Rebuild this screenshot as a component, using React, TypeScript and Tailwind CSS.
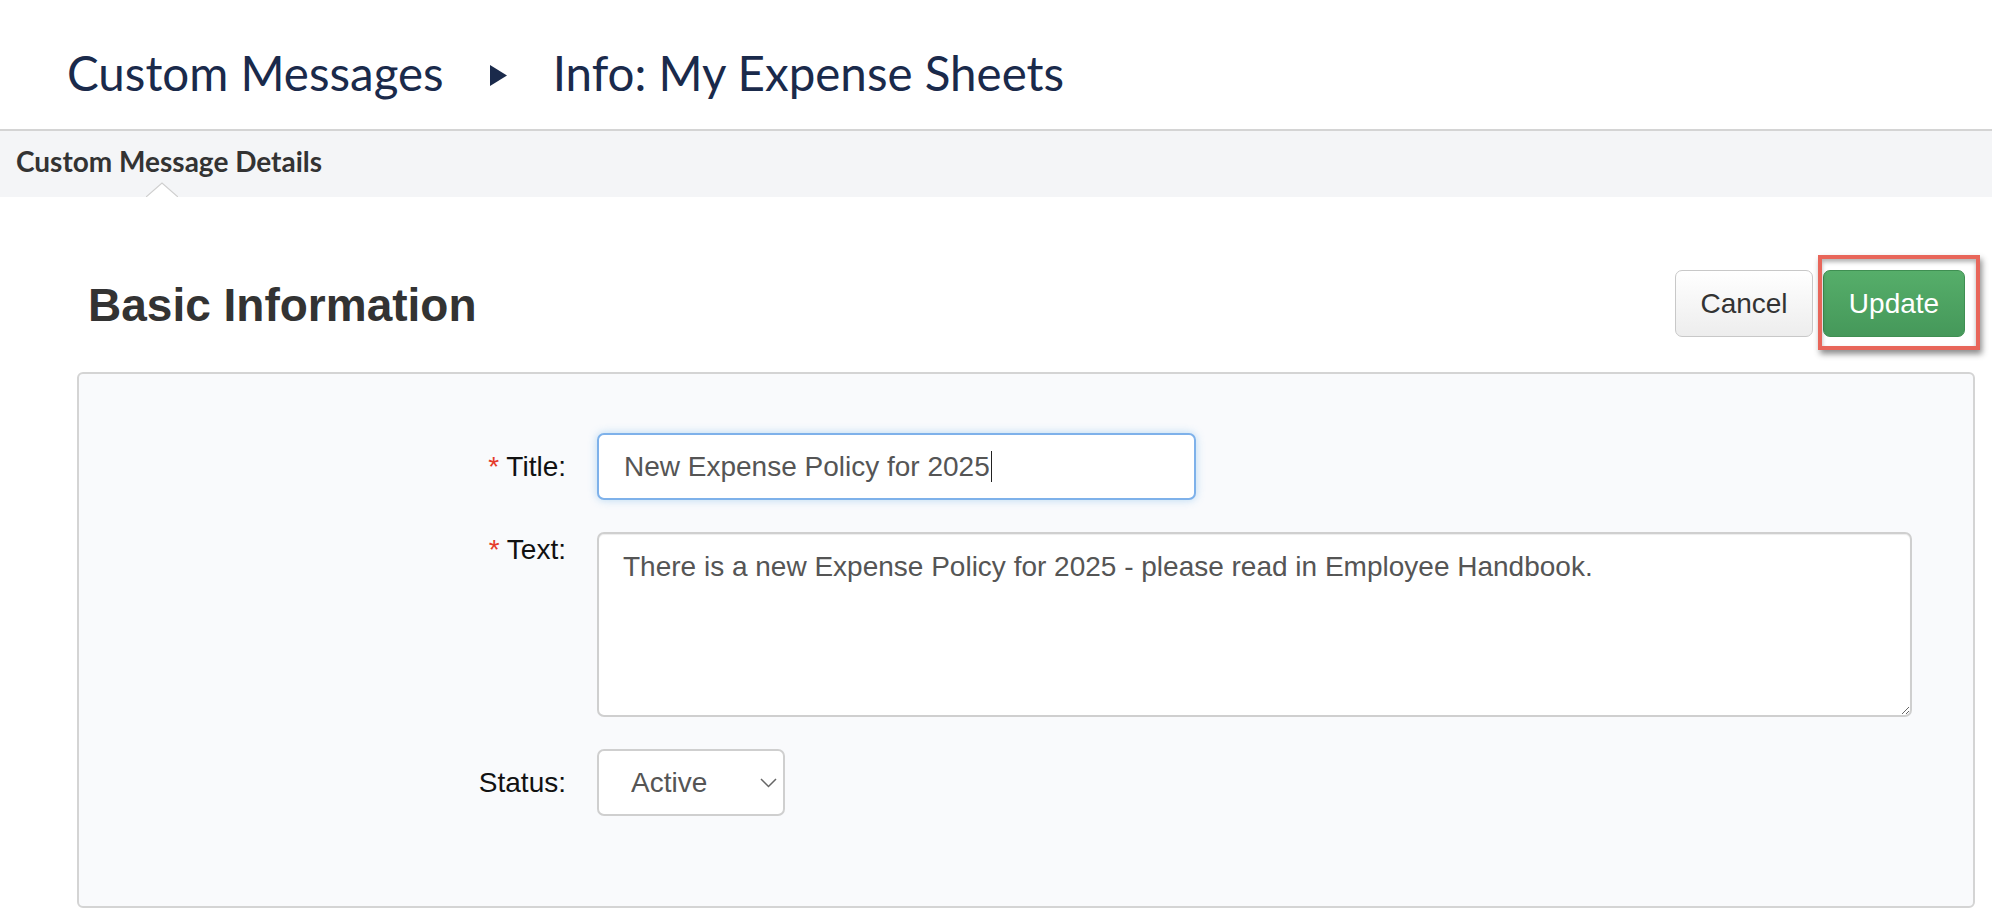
import React from 'react';

const navy = '#1a2a4b';

function Crumbs() {
  return (
    <header className="h-[131px] border-b-2 border-[#d4d4d4] bg-white pl-[67px] pt-[44px]">
      <div
        className="flex items-center font-['Lato',sans-serif] text-[47.5px] leading-[58px]"
        style={{ color: navy }}
      >
        <span>Custom Messages</span>
        <svg width="17" height="21" viewBox="0 0 17 21" className="mx-[46px] mt-[5px]">
          <path d="M0 0 L17 10.5 L0 21 Z" fill={navy} />
        </svg>
        <span>Info: My Expense Sheets</span>
      </div>
    </header>
  );
}

function TabBar() {
  return (
    <div className="relative h-[66px] bg-[#f4f5f7] pl-[16px] pt-[13px]">
      <span className="font-['Lato',sans-serif] text-[28px] font-bold leading-[34px] text-[#333]">
        Custom Message Details
      </span>
      <svg width="32" height="15" viewBox="0 0 32 15" className="absolute bottom-0 left-[146px]">
        <path d="M0 15 L16 1 L32 15 Z" fill="#fff" />
        <path d="M0 15 L16 1 L32 15" fill="none" stroke="#cfcfcf" strokeWidth="1.2" />
      </svg>
    </div>
  );
}

function Label({ text, required, className }: { text: string; required?: boolean; className?: string }) {
  return (
    <label
      className={`w-[487px] shrink-0 text-right text-[28px] leading-[40px] text-[#111] ${className ?? ''}`}
    >
      {required && <span className="text-[#e53a2a]">* </span>}
      {text}
    </label>
  );
}

export default function App() {
  return (
    <div className="min-h-screen bg-white font-['Liberation_Sans',Arial,sans-serif]">
      <Crumbs />
      <TabBar />

      <main className="pl-[77px] pr-[17px]">
        <div className="mt-[73px] flex h-[67px] items-start justify-between">
          <h2 className="ml-[11px] mt-[10px] text-[46px] font-bold leading-[50px] text-[#333]">
            Basic Information
          </h2>
          <div className="mr-[10px] flex gap-[10px]">
            <button className="h-[67px] w-[138px] rounded-[7px] border border-[#c8c8c8] bg-linear-to-b from-white to-[#ededed] text-[28px] text-[#333]">
              Cancel
            </button>
            <div className="relative">
              <button className="h-[67px] w-[142px] rounded-[7px] border border-[#3f8f52] bg-linear-to-b from-[#56ae6a] to-[#45985a] text-[28px] text-white">
                Update
              </button>
              <div className="pointer-events-none absolute -bottom-[13px] -left-[5px] -right-[15px] -top-[15px] border-4 border-[#e8665a] shadow-[2px_4px_6px_rgba(0,0,0,0.45),inset_0_3px_4px_rgba(0,0,0,0.3)]" />
            </div>
          </div>
        </div>

        <section className="mt-[35px] h-[536px] rounded-[6px] border-2 border-[#d4d4d4] bg-[#f9fafc] pr-[61px] pt-[59px]">
          <div className="flex items-center gap-[31px]">
            <Label text="Title:" required />
            <div className="flex h-[67px] w-[599px] items-center rounded-[7px] border-2 border-[#7eb1ea] bg-white pl-[25px] text-[28px] text-[#555] shadow-[0_0_8px_rgba(102,175,233,0.45)]">
              <span>New Expense Policy for 2025</span>
              <span className="ml-px inline-block h-[31px] w-[1.5px] bg-[#222]" />
            </div>
          </div>

          <div className="mt-[32px] flex items-start gap-[31px]">
            <Label text="Text:" required className="-mt-[2px]" />
            <textarea
              readOnly
              defaultValue="There is a new Expense Policy for 2025 - please read in Employee Handbook."
              className="h-[185px] flex-1 rounded-[7px] border-2 border-[#cfcfcf] bg-white pl-[24px] pt-[12px] text-[28px] text-[#555] shadow-[inset_0_1px_1px_rgba(0,0,0,0.075)] outline-none"
            />
          </div>

          <div className="mt-[32px] flex items-center gap-[31px]">
            <Label text="Status:" />
            <div className="relative h-[67px] w-[188px]">
              <select
                defaultValue="Active"
                className="h-full w-full appearance-none rounded-[7px] border-2 border-[#cfcfcf] bg-white pl-[32px] text-[28px] text-[#555] outline-none"
              >
                <option>Active</option>
                <option>Inactive</option>
              </select>
              <svg
                width="17"
                height="10"
                viewBox="0 0 17 10"
                className="pointer-events-none absolute right-[8px] top-[29px]"
              >
                <path d="M1 1 L8.5 8.5 L16 1" fill="none" stroke="#666" strokeWidth="1.5" />
              </svg>
            </div>
          </div>
        </section>
      </main>
    </div>
  );
}
